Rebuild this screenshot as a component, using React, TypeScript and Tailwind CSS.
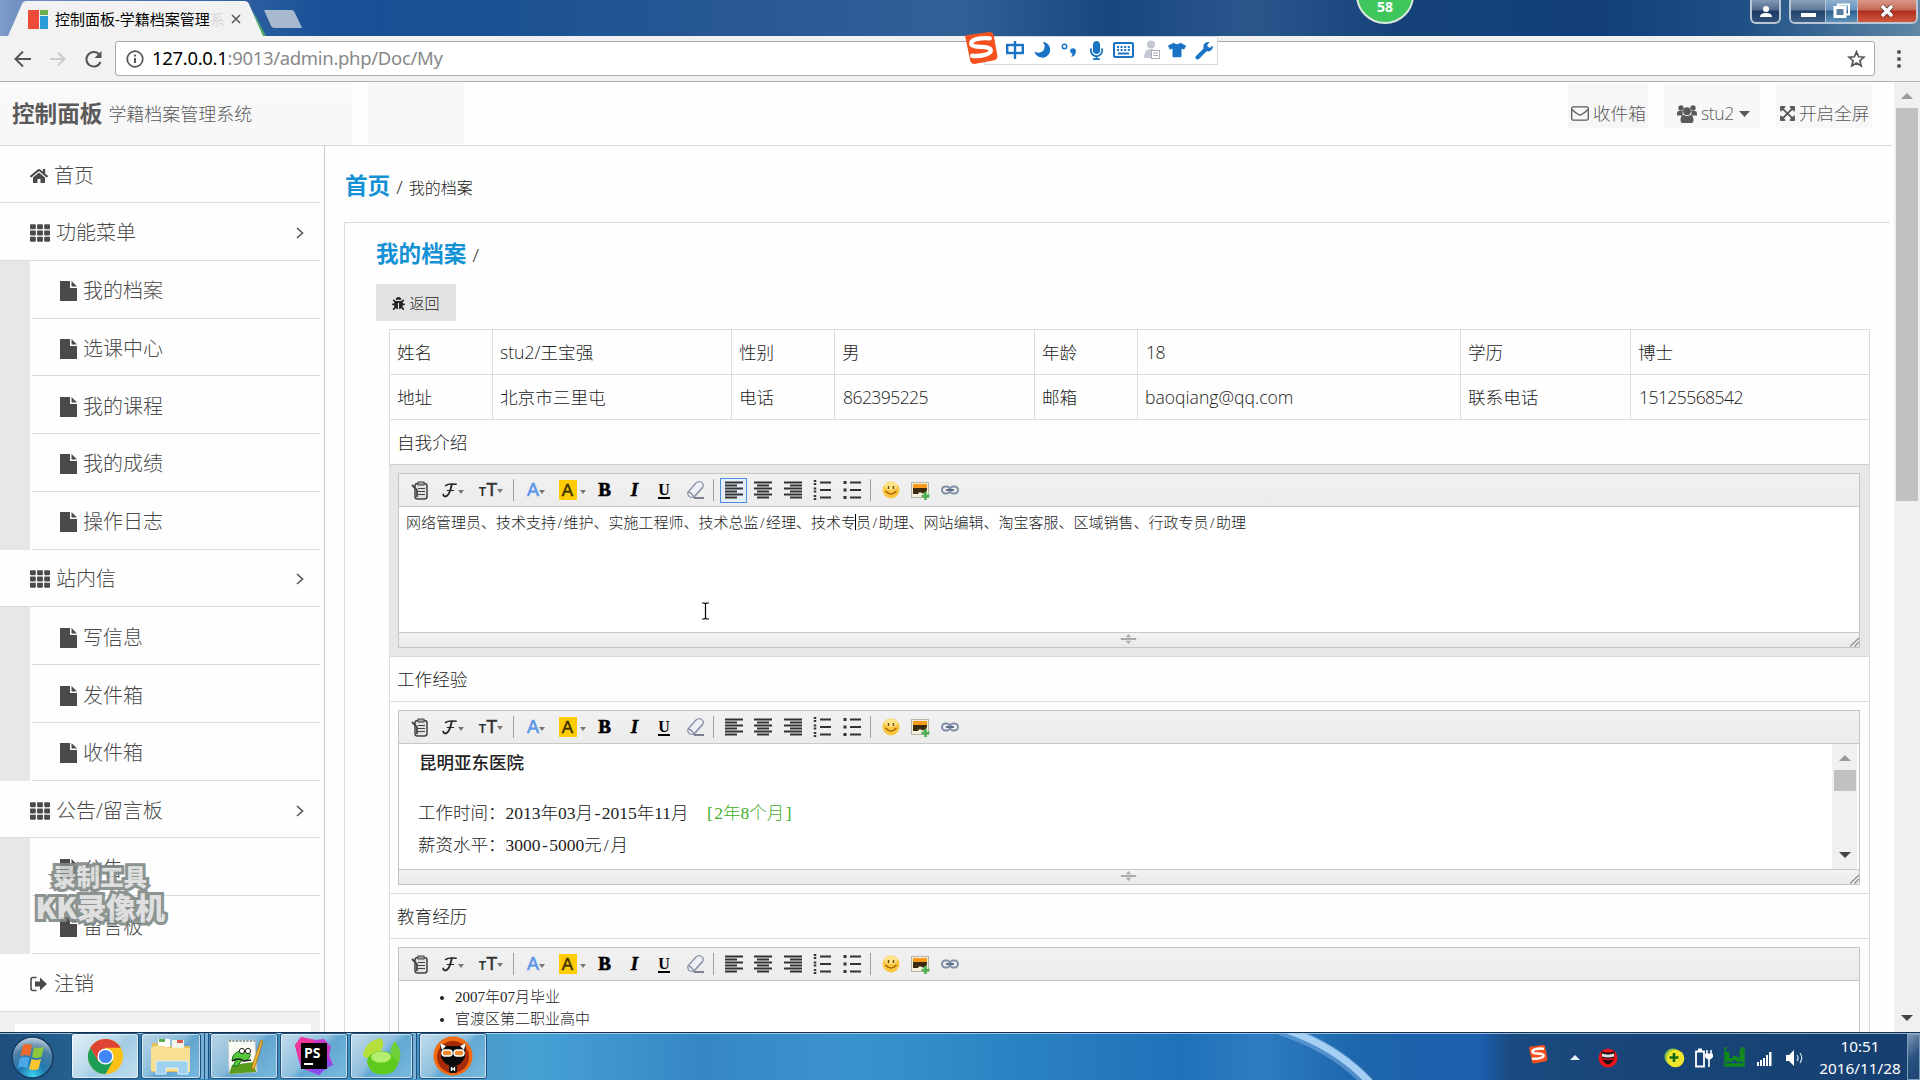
import React from "react";
import {
  FaHome,
  FaTh,
  FaRegEnvelope,
  FaExpandArrowsAlt,
  FaBug,
  FaCaretDown,
  FaMicrophone,
  FaTshirt,
  FaWrench,
  FaMoon,
} from "react-icons/fa";

const sans = "font-['Open_Sans','Noto_Sans_CJK_SC',sans-serif]";
const song = "font-['Liberation_Serif','Noto_Sans_CJK_SC',serif]";

/* ---------- Browser chrome ---------- */

function TitleBar() {
  return (
    <div className="relative flex h-[36px] shrink-0 overflow-hidden bg-[linear-gradient(90deg,#7f9dca_0px,#7391c2_14px,#2a5da0_255px,#184f96_330px,#1a5092_480px,#2a5a96_780px,#2f6096_960px,#17477f_1110px,#2a568c_1250px,#144279_1400px,#123f78_1600px,#1d4f85_1740px,#5f86a5_1920px)]">
      <svg className="h-[36px] w-[310px] shrink-0" viewBox="0 0 310 36">
        <path d="M252 9 L266 36 L262 36Z" fill="#4aa56a" />
        <path d="M8 36 L22 4 Q23 1 27 1 L244 1 Q248 1 249 4 L263 36Z" fill="#f2f2f2" />
        <path d="M264 10 h27 q3 0 4 3 l7 15 h-27 q-3 0-4-2z" fill="#a9b9cf" />
        <rect x="28" y="10" width="11" height="19" fill="#ee4a3a" />
        <rect x="40" y="10" width="8" height="5" fill="#6ab04c" />
        <rect x="40" y="16" width="8" height="13" fill="#2a9bd6" />
        <path d="M232 15 l8 8 M240 15 l-8 8" stroke="#555" strokeWidth="1.500" />
      </svg>
      <div className="absolute left-[55px] top-[7px] w-[174px] whitespace-nowrap text-[15px] leading-[24px] text-black">
        控制面板-学籍档案管理<span className="text-[#d8d8d8]">系</span>
      </div>
      <div className="absolute left-[1356px] top-[-34px] flex h-[58px] w-[58px] items-end justify-center rounded-full border-2 border-[#dfe9df] bg-[#3fc65c] pb-[6px] text-[14px] font-bold leading-[18px] text-white">
        58
      </div>
      <div className="ml-auto mr-[2px] flex h-[24px]">
        <div className="mr-[8px] flex w-[31px] items-center justify-center rounded-b-[6px] border-2 border-t-0 border-[#b9c6d6] bg-[linear-gradient(#8498b3,#50698c_45%,#1d3a63_50%,#2f5078)]">
          <svg width="12" height="13" viewBox="0 0 12 13" fill="#fff">
            <circle cx="6" cy="4" r="3" />
            <path d="M0 12q0-4 6-4t6 4z" />
          </svg>
        </div>
        <div className="flex overflow-hidden rounded-b-[6px] border-2 border-t-0 border-[#b9c6d6]">
          <div className="flex w-[35px] items-end justify-center border-r border-[#b9c6d6] bg-[linear-gradient(#8ea2ba,#607a9b_45%,#1f4068_50%,#3f6188)] pb-[5px]">
            <div className="h-[4px] w-[15px] bg-[#fff]" />
          </div>
          <div className="flex w-[32px] items-center justify-center border-r border-[#b9c6d6] bg-[linear-gradient(#8fb0cf,#6893bd_45%,#2e608f_50%,#5c90b8)]">
            <svg width="18" height="16" viewBox="0 0 18 16">
              <rect x="5" y="1.500" width="11" height="10" fill="none" stroke="#fff" strokeWidth="2" />
              <rect x="2" y="4.500" width="10" height="9" fill="#5c7f9f" stroke="#fff" strokeWidth="3" />
            </svg>
          </div>
          <div className="flex w-[58px] items-center justify-center bg-[linear-gradient(#d9978a,#c76a58_45%,#b02c1b_50%,#cf5a3e)]">
            <svg width="16" height="14" viewBox="0 0 16 14">
              <path d="M3 2l10 10M13 2L3 12" stroke="#5b3a3a" strokeWidth="5" />
              <path d="M3 2l10 10M13 2L3 12" stroke="#fff" strokeWidth="3.400" />
            </svg>
          </div>
        </div>
      </div>
    </div>
  );
}

function AddressBar() {
  return (
    <div className="flex h-[46px] shrink-0 items-center border-b border-[#b2b2b2] bg-[#f2f2f2]">
      <svg className="ml-[10px] h-[30px] w-[100px]" viewBox="0 0 100 30" fill="none" strokeWidth="2">
        <path d="M21 15H6M13 7.500L5.500 15l7.500 7.500" stroke="#555" />
        <path d="M40 15h14M48 8.500L54.500 15l-6.500 6.500" stroke="#ccc" />
        <path d="M90 11.500A7.300 7.300 0 1 0 90.500 18" stroke="#555" />
        <path d="M91.500 7v7h-7z" fill="#555" />
      </svg>
      <div className="ml-[5px] flex h-[35px] w-[1760px] items-center rounded-[3px] border border-[#a9a9a9] bg-white pl-[10px]">
        <svg width="18" height="18" viewBox="0 0 18 18" fill="none" stroke="#555" strokeWidth="1.700">
          <circle cx="9" cy="9" r="7.800" />
          <path d="M9 8v5M9 4.800v1.800" strokeWidth="2" />
        </svg>
        <span className="-mt-px ml-[8px] font-['Noto_Sans',sans-serif] text-[18.500px] leading-[30px] tracking-[-0.320px] text-[#888]">
          <span className="text-black">127.0.0.1</span>:9013/admin.php/Doc/My
        </span>
        <svg className="ml-auto mr-[8px]" width="19" height="18" viewBox="0 0 19 18">
          <path
            d="M9.500 1.800l2.100 5 5.400.4-4.100 3.500 1.300 5.300-4.700-2.900L4.800 16l1.300-5.300L2 7.200l5.400-.4z"
            fill="none"
            stroke="#555"
            strokeWidth="1.700"
          />
        </svg>
      </div>
      <div className="ml-[22px] flex flex-col gap-[3px]">
        <i className="size-[4px] rounded-full bg-[#555]" />
        <i className="size-[4px] rounded-full bg-[#555]" />
        <i className="size-[4px] rounded-full bg-[#555]" />
      </div>
    </div>
  );
}

function SogouMark({ className }: { className: string }) {
  return (
    <svg className={className} viewBox="0 0 36 34">
      <path d="M2 6Q1 3 4 3L27 0Q30 0 31 3L35 25Q35 28 32 29L11 33Q8 33 7 30Z" fill="#f4511e" />
      <path
        d="M27 6.500C17 5.500 7 8 8 12.500c1 4.500 19 1 20 6 1 4.500-11 7-19 6"
        fill="none"
        stroke="#fff"
        strokeWidth="4.500"
        strokeLinecap="round"
      />
    </svg>
  );
}

function SogouBar() {
  return (
    <div className="absolute left-[963px] top-[32px] flex h-[33px] items-center">
      <SogouMark className="z-10 h-[33px] w-[36px]" />
      <div className="-ml-[15px] mt-[3px] flex h-[29px] w-[234px] items-center border border-[#d5d9de] bg-white pl-[21px] text-[#1a73c4]">
        <svg className="w-[18px]" viewBox="0 0 18 18" fill="none" stroke="currentColor" strokeWidth="2.400">
          <rect x="1.200" y="4" width="15.600" height="8" />
          <path d="M9 0v18" />
        </svg>
        <FaMoon className="ml-[11px] -scale-x-100 rotate-[20deg]" size={16} />
        <svg className="ml-[10px] w-[16px]" viewBox="0 0 16 16">
          <circle cx="3.500" cy="4.500" r="2.200" fill="none" stroke="currentColor" strokeWidth="1.500" />
          <circle cx="12" cy="9" r="2.800" fill="currentColor" />
          <path d="M14.800 9q0 5-4.500 6l1-3z" fill="currentColor" />
        </svg>
        <FaMicrophone className="ml-[10px]" size={19} />
        <svg className="ml-[7px] w-[21px]" viewBox="0 0 21 16">
          <rect x="1" y="1" width="19" height="14" rx="1" fill="none" stroke="currentColor" strokeWidth="2" />
          <path d="M4 5h13M4 8h13" stroke="currentColor" strokeWidth="2" strokeDasharray="2 1.600" />
          <path d="M5 11.500h11" stroke="currentColor" strokeWidth="2" />
        </svg>
        <svg className="ml-[9px] w-[17px]" viewBox="0 0 17 20">
          <circle cx="8" cy="4.500" r="4" fill="#c4c8d2" />
          <path d="M1 18q0-9 7-9t7 9z" fill="#c4c8d2" />
          <rect x="8.500" y="10.500" width="8" height="8" fill="#fff" stroke="#aaaeb8" />
          <path d="M10 13h5M10 15.500h5" stroke="#aaaeb8" />
        </svg>
        <FaTshirt className="ml-[8px]" size={18} />
        <svg className="ml-[9px]" width="19" height="19" viewBox="0 0 19 19">
          <path d="M2.500 16.500L10 9" stroke="currentColor" strokeWidth="4" strokeLinecap="round" />
          <path d="M17.800 4.500L14.500 7l-2.500-2.500L14.500 1Q9.500.5 8.500 4.500q-.8 4 2.500 5.500 3.500 1.200 5.700-1.200 1.500-1.800 1.100-4.300z" fill="currentColor" />
        </svg>
      </div>
    </div>
  );
}

/* ---------- Page header ---------- */

function UsersIcon() {
  return (
    <svg width="20" height="18" viewBox="0 0 20 18" fill="currentColor">
      <circle cx="4" cy="3" r="2.700" />
      <circle cx="16" cy="3" r="2.700" />
      <path d="M0 10.500V8q0-2 2-2h4q-1.500 2.500 0 4.500z" />
      <path d="M20 10.500V8q0-2-2-2h-4q1.500 2.500 0 4.500z" />
      <circle cx="10" cy="6.200" r="3.900" />
      <path d="M3.500 15.500q0-5.500 3-5.500 3.500 2 7 0 3 0 3 5.500 0 2.500-2 2.500h-9q-2 0-2-2.500z" />
    </svg>
  );
}

function EnvelopeIcon() {
  return (
    <svg width="18" height="15" viewBox="0 0 18 15" fill="none" stroke="currentColor" strokeWidth="1.300">
      <rect x=".7" y=".9" width="16.600" height="13.200" rx="1.500" />
      <path d="M1 3.500q3 3 6.500 5 1.500 1 3 0 3.500-2 6.500-5" />
    </svg>
  );
}

function Header() {
  return (
    <div className="mr-[2px] flex h-[64px] shrink-0 border-b border-[#d9d9d9] text-[#5a5a5a]">
      <div className="flex h-full w-[352px] items-center bg-[linear-gradient(#fcfcfc,#f8f8f8_30%,#f8f8f8)] pl-[12px]">
        <span className="text-[22.600px] font-bold">控制面板</span>
        <span className="ml-[6px] mt-[2px] text-[18px] font-light">学籍档案管理系统</span>
      </div>
      <div className="ml-[16px] h-[62px] w-[96px] bg-[#f7f7f7]" />
      <div className="ml-auto mr-[20px] mt-[2px] flex h-[44px] items-stretch text-[17.600px] font-light">
        <div className="mr-[16px] flex w-[80px] items-center bg-[#f6f6f6] pl-[3px] pt-[15px]">
          <EnvelopeIcon />
          <span className="ml-[4px] whitespace-nowrap">收件箱</span>
        </div>
        <div className="mr-[16px] flex w-[96px] items-center bg-[#f8f8f8] pl-[13px] pt-[15px]">
          <UsersIcon />
          <span className="ml-[4px] tracking-[-0.400px]">stu2</span>
          <svg className="ml-[5px]" width="11" height="6" viewBox="0 0 11 6">
            <path d="M0 0h11L5.500 6z" fill="currentColor" />
          </svg>
        </div>
        <div className="flex w-[96px] items-center bg-[#f7f7f7] pl-[3px] pt-[15px]">
          <FaExpandArrowsAlt size={17} />
          <span className="ml-[3px] whitespace-nowrap">开启全屏</span>
        </div>
      </div>
    </div>
  );
}

/* ---------- Sidebar ---------- */

function SignOutIcon() {
  return (
    <svg width="18" height="16" viewBox="0 0 18 16">
      <path d="M6.500 1.500H3q-2 0-2 2v9q0 2 2 2h3.500" fill="none" stroke="currentColor" strokeWidth="1.600" />
      <path d="M5 5.500h5V1.500L17 8l-7 6.500v-4H5z" fill="currentColor" />
    </svg>
  );
}

const menu: { label: string; children: string[] }[] = [
  { label: "功能菜单", children: ["我的档案", "选课中心", "我的课程", "我的成绩", "操作日志"] },
  { label: "站内信", children: ["写信息", "发件箱", "收件箱"] },
  { label: "公告/留言板", children: ["公告", "留言板"] },
];

function Sidebar() {
  return (
    <div className="w-[325px] shrink-0 border-r border-[#c9c9c9] text-[20px] font-light leading-[24px] text-[#4a4a4a]">
      <div className="w-[320px]">
        <div className="flex h-[57px] items-center border-b border-[#dcdcdc] pl-[30px] pt-[4px]">
          <FaHome size={18} />
          <span className="ml-[6px]">首页</span>
        </div>
        {menu.map((group) => (
          <div key={group.label}>
            <div className="flex h-[57.770px] items-center border-b border-[#dcdcdc] pl-[30px] pt-[3px]">
              <FaTh size={20} />
              <span className="ml-[6px]">{group.label}</span>
              <svg className="ml-auto mr-[16px]" width="8" height="12" viewBox="0 0 8 12">
                <path d="M1 1l5.500 5L1 11" fill="none" stroke="#555" strokeWidth="1.600" />
              </svg>
            </div>
            <div className="border-l-[30px] border-[#e8e7e7] pl-[2px]">
              {group.children.map((item) => (
                <div key={item} className="flex h-[57.770px] items-center border-b border-[#dcdcdc] pl-[28px] pt-[4px]">
                  <svg width="17" height="20" viewBox="0 0 17 20" fill="currentColor">
                    <path d="M0 0h10v7h7v13H0z" />
                    <path d="M11.500 0L17 5.500h-5.500z" />
                  </svg>
                  <span className="ml-[6px]">{item}</span>
                </div>
              ))}
            </div>
          </div>
        ))}
        <div className="flex h-[57.770px] items-center border-b border-[#dcdcdc] pl-[30px] pt-[4px]">
          <SignOutIcon />
          <span className="ml-[6px]">注销</span>
        </div>
        <div className="h-[22px] bg-[#f0f0f0] pl-[15px] pr-[9px] pt-[12px]">
          <div className="h-[10px] bg-white" />
        </div>
      </div>
    </div>
  );
}

/* ---------- Rich text editor ---------- */

function Caret() {
  return <span className="mt-[3px] h-0 w-0 border-x-[3px] border-t-[4px] border-x-transparent border-t-[#777]" />;
}

function Separator() {
  return <span className="h-[22px] w-px bg-[#a0a0a0]" />;
}

function Lines({ rows }: { rows: [number, number][] }) {
  return (
    <svg width="18" height="18" viewBox="0 0 18 18" stroke="#333" strokeWidth="2">
      {rows.map(([from, to], i) => (
        <path key={i} d={`M${from} ${1.5 + i * 3}H${to}`} />
      ))}
    </svg>
  );
}

const leftRows: [number, number][] = [[0, 18], [0, 12], [0, 18], [0, 12], [0, 18], [0, 12]];
const centerRows: [number, number][] = [[0, 18], [3, 15], [0, 18], [3, 15], [0, 18], [3, 15]];
const rightRows: [number, number][] = [[0, 18], [6, 18], [0, 18], [6, 18], [0, 18], [6, 18]];

function Cell({ className, children }: { className: string; children: React.ReactNode }) {
  return <span className={`flex h-[25px] shrink-0 items-center justify-center ${className}`}>{children}</span>;
}

function Toolbar({ active }: { active?: boolean }) {
  return (
    <div className="flex h-[33px] items-center border-b border-[#c8c8c8] bg-[linear-gradient(#f1f1f1,#ececec)] text-[#333]">
      <Cell className="ml-[5px] w-[31px]">
        <svg width="17" height="19" viewBox="0 0 17 19" fill="none" stroke="#444" strokeWidth="1.500">
          <rect x="4" y="2.500" width="12" height="15.500" rx="2.500" fill="#e2e2e2" />
          <rect x="7" y="1" width="6" height="3" fill="#aaa" strokeWidth="1" />
          <path d="M7 7.500h7M7 10.500h7M7 13.500h7" strokeWidth="1" />
          <path d="M1 4l5 5v7" strokeWidth="1.800" />
        </svg>
      </Cell>
      <Cell className="w-[34px]">
        <svg width="17" height="17" viewBox="0 0 17 19" fill="none" stroke="#222" strokeLinecap="round">
          <path d="M4 4q3-2.500 12-1.500" strokeWidth="1.600" />
          <path d="M11 3Q8.500 14 5.500 15.500 2 17 1.500 14" strokeWidth="2" />
          <path d="M6 9.500h7" strokeWidth="1.300" />
        </svg>
        <Caret />
      </Cell>
      <Cell className="w-[44px] pb-px font-['Liberation_Sans',sans-serif]">
        <span className="mt-[4px] text-[12px] font-bold leading-none">T</span>
        <span className="text-[18px] font-medium leading-none [-webkit-text-stroke:0.500px_#333]">T</span>
        <Caret />
      </Cell>
      <Separator />
      <Cell className="w-[42px] pl-[2px] font-['Liberation_Sans',sans-serif] text-[18px] leading-none text-[#5b96e8] [-webkit-text-stroke:0.600px_#5b96e8]">
        A
        <Caret />
      </Cell>
      <Cell className="w-[30px] pl-[2px]">
        <span className="flex h-[20px] w-[18px] shrink-0 items-center justify-center bg-[#ffcb05] font-['Liberation_Sans',sans-serif] text-[17px] leading-none text-[#3a3000] [-webkit-text-stroke:0.500px_#3a3000]">
          A
        </span>
        <span className="w-[3px] shrink-0" />
        <Caret />
      </Cell>
      <Cell className="ml-[3px] w-[31px] font-['Liberation_Serif',serif] text-[19px] font-bold text-black [-webkit-text-stroke:0.700px_#000]">
        B
      </Cell>
      <Cell className="w-[29px] font-['Liberation_Serif',serif] text-[19px] font-bold italic text-black [-webkit-text-stroke:0.500px_#000]">
        I
      </Cell>
      <Cell className="w-[30px]">
        <span className="border-b-2 border-black font-['Liberation_Serif',serif] text-[16px] font-bold leading-[15px] text-black">U</span>
      </Cell>
      <Cell className="w-[34px]">
        <svg width="18" height="18" viewBox="0 0 18 18">
          <path d="M1 11L9 2q2-2 5-1t2 5l-8 9q-2 2-5 1-3-2-2-5z" fill="#eef0f6" stroke="#8b93a8" strokeWidth="1.300" />
          <path d="M1 11q3 0 6 5l8.500-9.500" fill="none" stroke="#8b93a8" strokeWidth="1.300" />
          <path d="M7 17h10" stroke="#555c6e" strokeWidth="1.500" />
        </svg>
      </Cell>
      <Separator />
      <Cell
        className={
          active
            ? "ml-[6px] mr-px w-[27px] border border-[#4a90e2] bg-[#e6eefa]"
            : "ml-[6px] mr-px w-[27px]"
        }
      >
        <Lines rows={leftRows} />
      </Cell>
      <Cell className="w-[30px]">
        <Lines rows={centerRows} />
      </Cell>
      <Cell className="w-[30px]">
        <Lines rows={rightRows} />
      </Cell>
      <Cell className="w-[28px]">
        <svg width="18" height="20" viewBox="0 0 18 20" stroke="#333" strokeWidth="1.800">
          <path d="M7 2.500h11M7 10h11M7 17.500h11" />
          <path d="M2 0v5M2 7.500v5M2 15v5" strokeDasharray="2 1" strokeWidth="2.500" />
        </svg>
      </Cell>
      <Cell className="w-[31px]">
        <svg width="18" height="20" viewBox="0 0 18 20" stroke="#333" strokeWidth="1.800">
          <path d="M7 2.500h11M7 10h11M7 17.500h11" />
          <path d="M.5 2.500h3M.5 10h3M.5 17.500h3" strokeWidth="3" />
        </svg>
      </Cell>
      <span className="w-[3px]" />
      <Separator />
      <Cell className="ml-[5px] w-[30px]">
        <svg width="18" height="18" viewBox="0 0 18 18">
          <circle cx="9" cy="9" r="8.500" fill="#f9c640" />
          <ellipse cx="9" cy="5" rx="6.500" ry="4" fill="#fde48a" />
          <path d="M6.500 5v3M11.500 5v3" stroke="#7a4b00" strokeWidth="1.500" />
          <path d="M3.500 10q5.500 6 11 0" fill="none" stroke="#a86400" strokeWidth="1.500" />
        </svg>
      </Cell>
      <Cell className="w-[29px]">
        <svg width="19" height="19" viewBox="0 0 19 19">
          <rect x=".5" y="1.500" width="17" height="15" fill="#f4f0dc" stroke="#b5b5a5" />
          <rect x="2" y="3" width="14" height="4" fill="#f79a1c" />
          <path d="M2 7h14v2q-2 5-5 3T7 13H2z" fill="#3c2a10" />
          <path d="M14.500 11v8M10.500 15h8" stroke="#49b04f" strokeWidth="2.600" />
        </svg>
      </Cell>
      <Cell className="w-[29px]">
        <svg width="18" height="10" viewBox="0 0 18 10" fill="none" stroke="#8090a8" strokeWidth="2">
          <rect x="1" y="1.500" width="8" height="7" rx="3.500" />
          <rect x="9" y="1.500" width="8" height="7" rx="3.500" />
          <path d="M5 5h8" stroke="#5f6f88" />
        </svg>
      </Cell>
    </div>
  );
}

function Editor({ active, scroll, children }: { active?: boolean; scroll?: boolean; children: React.ReactNode }) {
  return (
    <div className="w-[1462px] border border-[#c4c4c4] bg-white">
      <Toolbar active={active} />
      <div className="flex h-[125px] overflow-hidden">
        <div className="min-w-0 flex-1">{children}</div>
        {scroll && (
          <div className="mr-[2px] flex w-[25px] flex-col items-center bg-[#f0f0f0] pt-[11px]">
            <span className="h-0 w-0 border-x-[6px] border-b-[6px] border-x-transparent border-b-[#999]" />
            <span className="mt-[9px] h-[21px] w-[22px] bg-[#c1c1c1]" />
            <span className="mb-[11px] mt-auto h-0 w-0 border-x-[6px] border-t-[6px] border-x-transparent border-t-[#444]" />
          </div>
        )}
      </div>
      <div className="flex h-[15px] items-center border-t border-[#c8c8c8] bg-[linear-gradient(#f3f3f3,#e9e9e9)]">
        <svg className="-mt-[2px] ml-[721px]" width="17" height="10" viewBox="0 0 17 11" fill="#aaa">
          <path d="M0 4.500h17v2H0zM5.500 3.500L8.500 0l3 3.500zM5.500 7.500l3 3.500 3-3.500z" />
        </svg>
        <svg className="ml-auto mt-[4px]" width="9" height="10" viewBox="0 0 9 10" stroke="#888" strokeWidth="1.200">
          <path d="M0 9.500L9 1M4.500 9.500L9 5" />
        </svg>
      </div>
    </div>
  );
}

/* ---------- Record table ---------- */

const rows = [
  ["姓名", "stu2/王宝强", "性别", "男", "年龄", "18", "学历", "博士"],
  ["地址", "北京市三里屯", "电话", "862395225", "邮箱", "baoqiang@qq.com", "联系电话", "15125568542"],
];

function SectionTitle({ children }: { children: React.ReactNode }) {
  return <div className="flex h-[45px] items-center border-t border-[#dcdcdc] pl-[7px]">{children}</div>;
}

function Half({ children }: { children: React.ReactNode }) {
  return <span className="inline-block w-[0.5em] text-center">{children}</span>;
}

function Record() {
  return (
    <div className="ml-[13px] w-[1481px] border-x border-[#dcdcdc] text-[17.600px] font-light text-[#222]">
      {rows.map((row) => (
        <div
          key={row[0]}
          className="grid h-[45px] grid-cols-[102px_239px_103px_200px_103px_323px_170px_239px] border-t border-[#dcdcdc]"
        >
          {row.map((cell) => (
            <div
              key={cell}
              className={
                /^\d+$/.test(cell)
                  ? "flex items-center border-l border-[#dcdcdc] pl-[8px] tracking-[-0.600px]"
                  : "flex items-center border-l border-[#dcdcdc] pl-[7px] first:border-l-0"
              }
            >
              {cell}
            </div>
          ))}
        </div>
      ))}
      <SectionTitle>自我介绍</SectionTitle>
      <div className="h-[192px] border-t border-[#cfcfcf] bg-[#e7e7e7] pl-[8px] pt-[8px]">
        <Editor active>
          <div className={`whitespace-nowrap pl-[7px] pt-[4px] text-[15px] leading-[25px] ${song}`}>
            网络管理员、技术支持<Half>/</Half>维护、实施工程师、技术总监<Half>/</Half>经理、技术专
            <span className="-ml-px inline-block h-[16px] w-px bg-black align-[-2px]" />
            员<Half>/</Half>助理、网站编辑、淘宝客服、区域销售、行政专员<Half>/</Half>助理
          </div>
        </Editor>
      </div>
      <SectionTitle>工作经验</SectionTitle>
      <div className="h-[192px] border-t border-[#dcdcdc] pl-[8px] pt-[8px]">
        <Editor scroll>
          <div className={`pl-[20px] text-[17.500px] leading-[32px] ${song}`}>
            <div className="pt-[3px] font-medium">昆明亚东医院</div>
            <div className="-ml-px mt-[18px]">
              工作时间：2013年03月<Half>-</Half>2015年11月
              <span className="ml-[17px] text-[#3fae2a]">
                <Half>[</Half>2年8个月<Half>]</Half>
              </span>
            </div>
            <div className="-ml-px">
              薪资水平：3000<Half>-</Half>5000元<Half>/</Half>月
            </div>
          </div>
        </Editor>
      </div>
      <SectionTitle>教育经历</SectionTitle>
      <div className="h-[192px] border-t border-[#dcdcdc] pl-[8px] pt-[8px]">
        <Editor>
          <ul className={`list-disc pl-[56px] pt-[5px] text-[15px] leading-[22px] ${song}`}>
            <li>2007年07月毕业</li>
            <li>官渡区第二职业高中</li>
          </ul>
        </Editor>
      </div>
    </div>
  );
}

function Main() {
  return (
    <div className="min-w-0 flex-1 overflow-hidden">
      <div className="flex h-[76px] items-center pl-[20px] pt-[3px]">
        <span className="text-[22.600px] font-bold text-[#1490d4]">首页</span>
        <span className="ml-[6px] mt-[3px] text-[19px] font-light text-[#222]">/</span>
        <span className="ml-[6px] mt-[4px] text-[16px] font-light text-[#222]">我的档案</span>
      </div>
      <div className="ml-[19px] mr-[4px] h-[830px] border-l border-t border-[#dcdcdc] pl-[31px]">
        <div className="flex h-[61px] items-center pt-px">
          <span className="text-[22.600px] font-bold text-[#1490d4]">我的档案</span>
          <span className="ml-[6px] mt-[3px] text-[19px] font-light text-[#222]">/</span>
        </div>
        <div className="mb-[8px] flex h-[37px] w-[80px] items-center justify-center gap-[4px] bg-[#e2e2e2] pt-px text-[15px] font-light text-[#222]">
          <FaBug size={13} />
          返回
        </div>
        <Record />
      </div>
    </div>
  );
}

function Scrollbar() {
  return (
    <div className="flex w-[26px] shrink-0 flex-col items-center bg-[#f0f0f0]">
      <span className="mt-[11px] h-0 w-0 border-x-[6px] border-b-[6px] border-x-transparent border-b-[#999]" />
      <span className="mt-[9px] h-[393px] w-[22px] bg-[#c1c1c1]" />
      <span className="mb-[11px] mt-auto h-0 w-0 border-x-[6px] border-t-[6px] border-x-transparent border-t-[#444]" />
    </div>
  );
}

/* ---------- Taskbar ---------- */

function TaskButton({ className, children }: { className: string; children: React.ReactNode }) {
  return (
    <div
      className={`flex h-[46px] items-center justify-center rounded-[3px] border border-[#1f4f7c] shadow-[inset_0_0_0_1px_rgba(255,255,255,0.6)] ${className}`}
    >
      {children}
    </div>
  );
}

function Taskbar() {
  return (
    <div className="relative flex h-[48px] shrink-0 overflow-hidden border-t border-[#16304f] bg-[linear-gradient(90deg,#1d4d7c_0px,#24618f_70px,#3a86b5_200px,#4a9ccb_480px,#46a0d4_540px,#3587c4_700px,#3b93cd_850px,#2c84c4_1000px,#1f72b8_1180px,#2e7cc2_1260px,#1d66ab_1360px,#1c5fae_1480px,#1a4a80_1510px,#184578_1640px,#163f70_1920px)] shadow-[inset_0_1px_0_rgba(200,225,245,0.7)]">
      <svg className="absolute left-[1270px] top-0" width="120" height="48" viewBox="0 0 120 48">
        <path d="M10 -4Q66 14 100 52" fill="none" stroke="#7fb4e6" strokeWidth="12" opacity=".5" />
        <path d="M14 -4Q68 14 102 52" fill="none" stroke="#a6cff4" strokeWidth="7" />
      </svg>
      <svg className="ml-[11px] mt-[3px]" width="43" height="43" viewBox="0 0 43 43">
        <defs>
          <radialGradient id="orb" cx=".5" cy=".95" r=".95">
            <stop offset="0" stopColor="#41d3f2" />
            <stop offset=".35" stopColor="#1f78b0" />
            <stop offset=".7" stopColor="#4d7fa5" />
            <stop offset="1" stopColor="#c3d4e0" />
          </radialGradient>
        </defs>
        <circle cx="21.500" cy="21.500" r="20.500" fill="url(#orb)" stroke="#173b5e" strokeWidth="1.500" />
        <path d="M12 9q5-2 9 .5L19 20q-5-2-9.500 0z" fill="#ee6a2c" />
        <path d="M23 11q5 2 10-.5L30.500 21q-5 2-9.500 0z" fill="#8cc63f" />
        <path d="M9 22q5-2 9.500 0L16 32q-5-2-9 0z" fill="#4aa8e8" />
        <path d="M20.500 23q5 2 9.500 0L27.500 33q-5 2-9.500 0z" fill="#fdc82f" />
      </svg>
      <div className="ml-[17px] flex">
        <TaskButton className="w-[68px] bg-[linear-gradient(135deg,#e3eff6,#b9d8ea_45%,#a3cce4_55%,#c0deee)]">
          <svg width="37" height="37" viewBox="0 0 38 38">
            <circle cx="19" cy="19" r="18" fill="#fbc116" />
            <path d="M19 10H34.600A18 18 0 0 0 3.400 10L11 23z" fill="#de4336" />
            <path d="M3.400 10A18 18 0 0 0 19 37L27 23 19 27 11 23z" fill="#1b9e57" />
            <circle cx="19" cy="19" r="8.300" fill="#fff" />
            <circle cx="19" cy="19" r="6.800" fill="#4285f4" />
          </svg>
        </TaskButton>
        <TaskButton className="ml-[2px] w-[60px] bg-[linear-gradient(135deg,#b9d5e6,#8bbcdb_45%,#62a5cf_55%,#79b9de)]">
          <svg width="42" height="38" viewBox="0 0 42 38">
            <path d="M2 6h10l2 3h26v26H2z" fill="#e5bf5c" />
            <path d="M8 2h12v8H8z" fill="#fff" />
            <path d="M22 3h12v8H22z" fill="#f3f3e8" />
            <path d="M9 2h6v3H9z" fill="#5eb04c" />
            <path d="M27 3h6v3h-6z" fill="#d55" />
            <path d="M1 10q10-3 19 1h20v23H1z" fill="#f8df92" />
            <path d="M6 24h32v13H28v-6H16v6H6z" fill="#9fd0ee" stroke="#dff1fb" />
          </svg>
        </TaskButton>
        <div className="h-[46px] w-[4px] border-r border-[#1f4f7c] bg-[#77b0d4]" />
        <div className="h-[46px] w-[4px] border-r border-[#1f4f7c] bg-[#77b0d4]" />
        <TaskButton className="ml-px w-[68px] bg-[linear-gradient(135deg,#b9d5e6,#8bbcdb_45%,#62a5cf_55%,#79b9de)]">
          <svg width="40" height="38" viewBox="0 0 40 38">
            <path d="M4 3h27l2 32-28 2z" fill="#fbfbf5" stroke="#b9c4c9" />
            <path d="M5 4h26" stroke="#899" strokeWidth="2" strokeDasharray="2 1.500" />
            <path d="M8 28l22-3 2 10-27 2z" fill="#5a9c1e" />
            <path d="M9 19q4-6 11-5 7 0 6 5t-9 5l-3 5h-5l3-6-4 1z" fill="#54c83a" stroke="#1f6c1a" />
            <path d="M8 24q6-4 12 0l7-1" fill="none" stroke="#222" strokeWidth="1.500" />
            <circle cx="18" cy="14" r="2.600" fill="#fff" stroke="#222" />
            <circle cx="24" cy="14" r="2.600" fill="#fff" stroke="#222" />
            <path d="M37 3l2 1-8 26-3 4v-5z" fill="#f0b52e" stroke="#9c6a10" strokeWidth=".7" />
          </svg>
        </TaskButton>
        <TaskButton className="ml-[2px] w-[68px] bg-[linear-gradient(135deg,#c4dceb,#8fc0de_45%,#62a8d2_55%,#79b9de)]">
          <div className="relative flex size-[38px] items-center justify-center">
            <svg className="absolute inset-0" width="38" height="38" viewBox="0 0 38 38">
              <path d="M0 8L6 0l14 3 9-1 7 8-2 8 4 10-7 3-7 7-10-4-8-3L3 20z" fill="#c837c9" />
              <path d="M0 8L6 0l14 3-16 20z" fill="#f0389b" />
              <path d="M14 34l16-16 8 10-7 3-7 7z" fill="#8b4af0" />
            </svg>
            <div className="relative flex size-[26px] flex-col bg-black pl-[3px] pt-px font-['Open_Sans',sans-serif] text-[14px] font-bold leading-[17px] text-white">
              PS
              <i className="mt-[2px] h-[2px] w-[9px] bg-white" />
            </div>
          </div>
        </TaskButton>
        <TaskButton className="ml-[2px] w-[63px] bg-[linear-gradient(135deg,#c4dceb,#8fc0de_45%,#62a8d2_55%,#79b9de)]">
          <svg width="40" height="38" viewBox="0 0 40 38">
            <path d="M1 18Q3 5 18 1q4 1 3 8-2 9-11 12-7 1-9-3z" fill="#b6df3c" />
            <path d="M33 4q8 10 4 22l-7-4q-4-10 3-18z" fill="#6fcf38" />
            <path d="M5 25q1-10 14-11 9 0 12 6 3 3 5 6-2 11-15 11.500T5 25z" fill="#5ecb1c" />
            <ellipse cx="19" cy="20" rx="10" ry="5.500" fill="#b4ed70" />
          </svg>
        </TaskButton>
        <div className="mr-[2px] h-[46px] w-[4px] border-r border-[#1f4f7c] bg-[#77b0d4]" />
        <TaskButton className="w-[68px] bg-[linear-gradient(135deg,#c4dceb,#8fc0de_45%,#62a8d2_55%,#79b9de)]">
          <svg width="40" height="40" viewBox="0 0 40 40">
            <circle cx="20" cy="20" r="19.500" fill="#f26a11" />
            <circle cx="20" cy="21" r="16" fill="#a52a08" />
            <path d="M7 7l7 3h12l7-3-1 9v5q-4 9-12 9T8 21v-5z" fill="#0b0b0b" />
            <path d="M7 7l6 3-4 4zM33 7l-6 3 4 4z" fill="#fff" />
            <rect x="9" y="14" width="10" height="6" rx="3" fill="#f28a2a" stroke="#fff" strokeWidth="1.600" />
            <rect x="21" y="14" width="10" height="6" rx="3" fill="#f28a2a" stroke="#fff" strokeWidth="1.600" />
            <rect x="16" y="29" width="8" height="8" rx="2" fill="#111" />
            <path d="M18.500 31v4M21.500 31v4M18.500 33h3" stroke="#fff" strokeWidth="1.300" />
          </svg>
        </TaskButton>
      </div>
      <div className="ml-auto flex items-center">
        <SogouMark className="-mt-[5px] h-[19px] w-[20px]" />
        <span className="ml-[22px] mt-[1px] h-0 w-0 border-x-[5px] border-b-[5px] border-x-transparent border-b-[#e8eef5]" />
        <svg className="ml-[18px] mt-[2px]" width="20" height="20" viewBox="0 0 20 20">
          <circle cx="10" cy="10" r="9.500" fill="#e8141c" />
          <path d="M3.500 3l3.500 1.500h6L16.500 3l-.5 6q-1 6-6 7.500Q5 15 4 9z" fill="#111" />
          <path d="M4 5.500q6 2 12 0v3q-6 2-12 0z" fill="#ddd" />
          <path d="M5 10.500q5 2 10 0" stroke="#e8141c" fill="none" strokeWidth="1.500" />
        </svg>
        <svg className="ml-[46px] mt-[2px]" width="21" height="20" viewBox="0 0 21 20">
          <circle cx="9" cy="9" r="8.500" fill="#8bc53f" />
          <circle cx="11.500" cy="10.500" r="8.800" fill="#f1e62c" />
          <path d="M10 5v9M5.500 9.500h9" stroke="#166a16" strokeWidth="2.600" />
        </svg>
        <svg className="ml-[9px] mt-[2px]" width="20" height="20" viewBox="0 0 20 20" fill="none" stroke="#fff">
          <path d="M2 3.500h8v15H2zM4 1.500h4" strokeWidth="1.800" />
          <path d="M13 2v4M17 2v4M15 10v9" strokeWidth="1.600" />
          <path d="M11.500 6h7v3l-2 2h-3l-2-2z" fill="#fff" />
        </svg>
        <svg className="ml-[10px] mt-[2px]" width="21" height="21" viewBox="0 0 21 21" fill="none" stroke="#118a1b">
          <path d="M1 20V1h2M18 1h2v19z" strokeWidth="1.500" />
          <path d="M3.500 5v8h4v-2M17.500 2v11h-4v-3M10.500 9v4M2 18h17" strokeWidth="3.500" />
        </svg>
        <svg className="ml-[12px] mt-[4px]" width="15" height="14" viewBox="0 0 15 14" fill="#fff">
          <path d="M0 10h2v4H0zM3 8h2v6H3zM6 6h2v8H6zM9 3h2v11H9zM12 0h2.500v14H12z" />
        </svg>
        <svg className="ml-[13px] mt-[2px]" width="19" height="18" viewBox="0 0 19 18">
          <path d="M1 6h3l5-5v16l-5-5H1z" fill="#fff" />
          <path d="M12 6q2 3 0 6M15 4q3.500 5 0 10" fill="none" stroke="#c9d8e8" strokeWidth="1.300" />
        </svg>
        <div className="ml-[12px] w-[88px] text-center font-['Noto_Sans',sans-serif] text-[15.300px] leading-[22px] text-white">
          <div>10:51</div>
          <div>2016/11/28</div>
        </div>
        <div className="ml-[3px] h-[46px] w-[13px] border border-[#7f9dbb] bg-[linear-gradient(135deg,#7d98b3,#2a5280_50%,#1b4374)]" />
      </div>
    </div>
  );
}

/* ---------- Overlays ---------- */

function RecorderWatermark() {
  return (
    <div className="absolute left-[28px] top-[861px] flex w-[144px] flex-col items-center font-['Noto_Sans_CJK_SC',sans-serif] font-black text-[#dcdcdc] opacity-90 [-webkit-text-stroke:6px_#7f8986] [paint-order:stroke]">
      <div className="whitespace-nowrap text-[23.500px] leading-[30px]">录制工具</div>
      <div className="whitespace-nowrap text-[30px] leading-[30px] tracking-[-0.600px]">KK录像机</div>
    </div>
  );
}

function TextCursor() {
  return (
    <svg
      className="absolute left-[701px] top-[602px]"
      width="9"
      height="18"
      viewBox="0 0 9 18"
      fill="none"
      stroke="#000"
      strokeWidth="1.200"
    >
      <path d="M1 1h2.500l1 1 1-1H8M1 17h2.500l1-1 1 1H8M4.500 2v14" />
    </svg>
  );
}

export default function App() {
  return (
    <div className={`relative flex h-[1080px] w-[1920px] flex-col overflow-hidden bg-[#fefefe] ${sans}`}>
      <TitleBar />
      <AddressBar />
      <div className="flex min-h-0 flex-1">
        <div className="flex min-w-0 flex-1 flex-col overflow-hidden">
          <Header />
          <div className="flex min-h-0 flex-1 overflow-hidden">
            <Sidebar />
            <Main />
          </div>
        </div>
        <Scrollbar />
      </div>
      <Taskbar />
      <SogouBar />
      <RecorderWatermark />
      <TextCursor />
    </div>
  );
}
